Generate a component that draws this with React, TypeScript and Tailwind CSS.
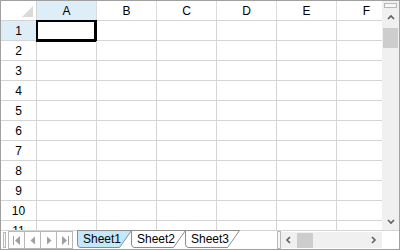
import React from 'react';

const cols = ['A', 'B', 'C', 'D', 'E', 'F'];
const rows = [1, 2, 3, 4, 5, 6, 7, 8, 9, 10, 11];

const Chevron: React.FC<{ dir: 'up' | 'down' | 'left' | 'right' }> = ({ dir }) => {
  const d = {
    up: 'M1 5 L4 2 L7 5',
    down: 'M1 2 L4 5 L7 2',
    left: 'M5 1 L2 4 L5 7',
    right: 'M2 1 L5 4 L2 7',
  }[dir];
  return (
    <svg width="8" height="8" viewBox="0 0 8 8">
      <path d={d} fill="none" stroke="#606060" strokeWidth="1.6" />
    </svg>
  );
};

const NavButton: React.FC<{ kind: 'first' | 'prev' | 'next' | 'last' }> = ({ kind }) => (
  <div className="w-4 h-[17px] border-r border-[#b8b8b8] flex items-center justify-center">
    <svg width="10" height="11" viewBox="0 0 10 11">
      {kind === 'first' && (
        <>
          <rect x="1" y="1" width="1" height="9" fill="#a0a0a0" />
          <path d="M8 1 L3 5.5 L8 10 Z" fill="#a0a0a0" />
        </>
      )}
      {kind === 'prev' && <path d="M7 1.5 L2.5 5.5 L7 9.5 Z" fill="#a0a0a0" />}
      {kind === 'next' && <path d="M3 1.5 L7.5 5.5 L3 9.5 Z" fill="#a0a0a0" />}
      {kind === 'last' && (
        <>
          <path d="M2 1 L7 5.5 L2 10 Z" fill="#a0a0a0" />
          <rect x="8" y="1" width="1" height="9" fill="#a0a0a0" />
        </>
      )}
    </svg>
  </div>
);

const SheetTab: React.FC<{ name: string; active?: boolean; width: number }> = ({ name, active, width }) => (
  <div className="relative h-[18px] flex items-center pl-[6px]" style={{ width }}>
    <svg className="absolute left-0 top-0" width={width + 14} height="18" viewBox={`0 0 ${width + 14} 18`}>
      <path
        d={`M0.5 0.5 L${width - 1}.5 0.5 L${width - 13}.5 17.5 L3 17.5 Q0.5 17 0.5 14 Z`}
        fill={active ? '#c3e8fb' : '#ffffff'}
        stroke="#8c8c8c"
        strokeWidth="1"
      />
    </svg>
    <span className="relative text-[12px] text-black leading-none">{name}</span>
  </div>
);

export default function App() {
  return (
    <div
      className="w-[400px] h-[250px] bg-white border border-[#a0a0a0] overflow-hidden flex flex-col"
      style={{ fontFamily: '"Liberation Sans", Arial, sans-serif' }}
    >
      <div className="flex h-[229px]">
        {/* Grid */}
        <div className="w-[381px] overflow-hidden">
          {/* Column header */}
          <div className="flex h-5 border-b border-[#d4d4d4]">
            <div className="w-9 shrink-0 border-r border-[#d4d4d4] relative">
              <svg className="absolute right-[3px] bottom-[3px]" width="11" height="11" viewBox="0 0 11 11">
                <path d="M11 0 L11 11 L0 11 Z" fill="#dadada" />
              </svg>
            </div>
            {cols.map((c) => (
              <div
                key={c}
                className={`w-[60px] shrink-0 border-r border-[#dcdcdc] flex items-center justify-center text-[12px] ${
                  c === 'A' ? 'bg-[#ddeef8]' : 'bg-white'
                }`}
              >
                {c}
              </div>
            ))}
          </div>
          {/* Rows */}
          {rows.map((r) => (
            <div key={r} className="flex h-5 border-b border-[#d4d4d4]">
              <div
                className={`w-9 shrink-0 border-r border-[#d4d4d4] flex items-center justify-center text-[12px] ${
                  r === 1 ? 'bg-[#ddeef8]' : 'bg-white'
                }`}
              >
                {r}
              </div>
              {cols.map((c) => (
                <div key={c} className="w-[60px] shrink-0 border-r border-[#d4d4d4] relative">
                  {r === 1 && c === 'A' && (
                    <div className="absolute -left-px -top-px w-[61px] h-[22px] border-2 border-black border-r-[3px] border-b-[3px]" />
                  )}
                </div>
              ))}
            </div>
          ))}
        </div>
        {/* Vertical scrollbar */}
        <div className="w-[17px] bg-[#f0f0f0] flex flex-col items-center">
          <div className="mt-[2px] w-[13px] h-[5px] border border-[#b8b8b8] bg-[#f7f7f7]" />
          <div className="h-[14px] mt-[3px] flex items-center justify-center">
            <Chevron dir="up" />
          </div>
          <div className="w-[15px] h-[20px] bg-[#cdcdcd] mt-[3px]" />
          <div className="flex-1" />
          <div className="h-[14px] mb-[1px] flex items-center justify-center">
            <Chevron dir="down" />
          </div>
        </div>
      </div>
      {/* Bottom bar */}
      <div className="flex h-[19px] border-t border-[#d4d4d4] items-start">
        <div className="w-[3px] h-[16px] ml-[2px] mt-[1px] border border-[#b8b8b8] bg-[#f7f7f7]" />
        <div className="flex ml-[2px] border border-[#b8b8b8] border-r-0 h-[18px]">
          <NavButton kind="first" />
          <NavButton kind="prev" />
          <NavButton kind="next" />
          <NavButton kind="last" />
        </div>
        <div className="flex ml-[4px] -mt-px">
          <div className="relative z-30">
            <SheetTab name="Sheet1" active width={55} />
          </div>
          <div className="relative z-20 -ml-[1px]">
            <SheetTab name="Sheet2" width={55} />
          </div>
          <div className="relative z-10 -ml-[1px]">
            <SheetTab name="Sheet3" width={55} />
          </div>
        </div>
        <div className="flex-1" />
        {/* Horizontal scrollbar */}
        <div className="w-[4px] h-[18px] border border-[#b8b8b8] bg-[#f7f7f7]" />
        <div className="w-[101px] h-[16px] mt-[1px] bg-[#f0f0f0] flex items-center">
          <div className="w-[16px] flex items-center justify-center">
            <Chevron dir="left" />
          </div>
          <div className="w-[16px] h-[15px] bg-[#cdcdcd]" />
          <div className="flex-1" />
          <div className="w-[16px] flex items-center justify-center">
            <Chevron dir="right" />
          </div>
        </div>
        <div className="w-[17px]" />
      </div>
    </div>
  );
}
